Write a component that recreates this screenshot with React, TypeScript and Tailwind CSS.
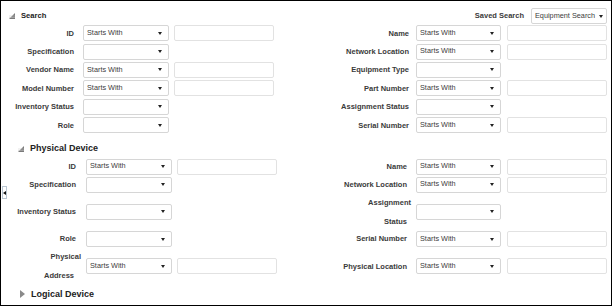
import React from "react";

const Arrow = () => (
  <svg width="4" height="3" viewBox="0 0 4 3" className="shrink-0">
    <polygon points="0,0 4,0 2,3" fill="#222" />
  </svg>
);

const Select = ({ text, w, pr = "pr-[6px]" }: { text: string; w: string; pr?: string }) => (
  <div
    className={`${w} h-[16px] shrink-0 border border-[#d6d6d6] rounded-[2px] bg-white flex items-center pl-[3px] ${pr} text-[7.3px] text-[#3c3c3c] font-normal`}
  >
    <span className="flex-1 whitespace-nowrap overflow-hidden">{text}</span>
    <Arrow />
  </div>
);

const Input = () => (
  <div className="w-[100px] h-[16px] shrink-0 border border-[#e2e2e2] rounded-[2px] bg-white" />
);

const Spacer = () => <div className="w-[100px] h-[16px] shrink-0" />;

type Lbl = string | [string, string, string, string];

const Label = ({ l, w }: { l: Lbl; w: string }) => {
  if (typeof l === "string") {
    return (
      <div className={`${w} shrink-0 text-right font-bold text-[7.5px] text-[#3a3a3a] whitespace-nowrap`}>
        {l}
      </div>
    );
  }
  return (
    <div className={`${w} shrink-0 flex flex-col items-end font-bold text-[7.5px] text-[#3a3a3a] leading-[19px] whitespace-nowrap`}>
      <span className={l[2]}>{l[0]}</span>
      <span className={l[3]}>{l[1]}</span>
    </div>
  );
};

type RowProps = {
  l1: Lbl;
  s1: string;
  i1: boolean;
  l2: Lbl;
  s2: string;
  i2: boolean;
  h: string;
  v: "search" | "phys";
};

const Row = ({ l1, s1, i1, l2, s2, i2, h, v }: RowProps) => {
  const S = v === "search";
  return (
    <div className={`flex items-center ${h}`}>
      <Label l={l1} w={S ? "w-[73px]" : "w-[75px]"} />
      <div className={S ? "ml-[9px]" : "ml-[10px]"}>
        <Select text={s1} w="w-[86px]" />
      </div>
      <div className="ml-[5px]">{i1 ? <Input /> : <Spacer />}</div>
      <Label l={l2} w={S ? "w-[135px]" : "w-[130px]"} />
      <div className={S ? "ml-[7px]" : "ml-[9px]"}>
        <Select text={s2} w="w-[85px]" />
      </div>
      <div className="ml-[6px]">{i2 ? <Input /> : <Spacer />}</div>
    </div>
  );
};

const Expanded = () => (
  <svg width="6" height="6" viewBox="0 0 6 6" className="shrink-0">
    <polygon points="6,0 6,6 0,6" fill="#7a7a7a" />
    <line x1="0" y1="4.5" x2="6" y2="4.5" stroke="#c8c8c8" strokeWidth="0.5" />
    <line x1="0" y1="3" x2="6" y2="3" stroke="#c8c8c8" strokeWidth="0.5" />
  </svg>
);

const Collapsed = () => (
  <svg width="5" height="8" viewBox="0 0 5 8" className="shrink-0">
    <polygon points="0,0 5,4 0,8" fill="#8a8a8a" />
  </svg>
);

export default function App() {
  const SW = "Starts With";
  return (
    <div className="w-[612px] h-[306px] border border-black relative overflow-hidden bg-white font-['Liberation_Sans',Arial,sans-serif] text-[#333]">
      <div className="pt-[7px]">
        <div className="flex items-center h-[16px] pl-[8px] pr-[4px]">
          <Expanded />
          <span className="ml-[6px] font-bold text-[7.6px] text-[#222]">Search</span>
          <span className="ml-auto font-bold text-[7.5px] text-[#3a3a3a]">Saved Search</span>
          <div className="ml-[7px]">
            <Select text="Equipment Search" w="w-[76px]" pr="pr-[3px]" />
          </div>
        </div>

        <Row v="search" h="h-[18.4px]" l1="ID" s1={SW} i1 l2="Name" s2={SW} i2 />
        <Row v="search" h="h-[18.4px]" l1="Specification" s1="" i1={false} l2="Network Location" s2={SW} i2 />
        <Row v="search" h="h-[18.4px]" l1="Vendor Name" s1={SW} i1 l2="Equipment Type" s2="" i2={false} />
        <Row v="search" h="h-[18.4px]" l1="Model Number" s1={SW} i1 l2="Part Number" s2={SW} i2 />
        <Row v="search" h="h-[18.4px]" l1="Inventory Status" s1="" i1={false} l2="Assignment Status" s2="" i2={false} />
        <Row v="search" h="h-[18.4px]" l1="Role" s1="" i1={false} l2="Serial Number" s2={SW} i2 />

        <div className="flex items-center h-[18px] mt-[5.5px] pl-[17px]">
          <Expanded />
          <span className="ml-[6px] font-bold text-[9px] text-[#222]">Physical Device</span>
        </div>

        <Row v="phys" h="h-[18px]" l1="ID" s1={SW} i1 l2="Name" s2={SW} i2 />
        <Row v="phys" h="h-[18px]" l1="Specification" s1="" i1={false} l2="Network Location" s2={SW} i2 />
        <Row
          v="phys"
          h="h-[36px]"
          l1="Inventory Status"
          s1=""
          i1={false}
          l2={["Assignment", "Status", "mr-[-4px]", "mr-0"]}
          s2=""
          i2={false}
        />
        <Row v="phys" h="h-[18.5px]" l1="Role" s1="" i1={false} l2="Serial Number" s2={SW} i2 />
        <Row
          v="phys"
          h="h-[36px]"
          l1={["Physical", "Address", "mr-[-5px]", "mr-[2px]"]}
          s1={SW}
          i1
          l2="Physical Location"
          s2={SW}
          i2
        />

        <div className="flex items-center h-[18px] mt-[1px] pl-[19px]">
          <Collapsed />
          <span className="ml-[6px] font-bold text-[9px] text-[#222]">Logical Device</span>
        </div>
      </div>

      <div className="absolute left-[1px] top-[185px] w-[5px] h-[13px] border border-[#b9c6d2] bg-white flex items-center justify-center">
        <svg width="3" height="4" viewBox="0 0 3 4">
          <polygon points="3,0 3,4 0,2" fill="#111" />
        </svg>
      </div>
    </div>
  );
}
